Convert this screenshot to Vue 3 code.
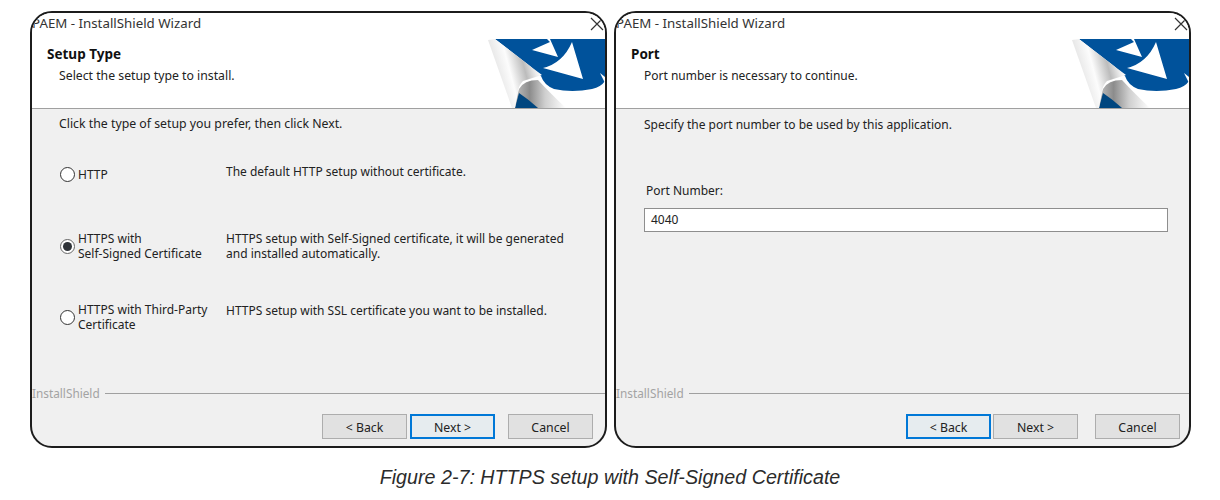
<template>
  <div class="page">
    <div class="windows">
      <div class="window" v-for="win in windows" :key="win.id" :class="win.id">
        <div class="title">PAEM - InstallShield Wizard</div>
        <svg class="close" viewBox="0 0 14 14"><path d="M1 1L13 13M13 1L1 13" /></svg>
        <div class="head">
          <div class="head-text">
            <div class="head-title">{{ win.heading }}</div>
            <div class="head-sub">{{ win.sub }}</div>
          </div>
          <svg class="logo" viewBox="0 0 117 69">
            <defs>
              <linearGradient :id="'curl' + win.id" x1="0.1" y1="0.35" x2="0.85" y2="0.1">
                <stop offset="0" stop-color="#e6e6e6" />
                <stop offset="0.32" stop-color="#fcfcfc" />
                <stop offset="0.66" stop-color="#bcbcbc" />
                <stop offset="0.88" stop-color="#ececec" />
                <stop offset="1" stop-color="#ffffff" />
              </linearGradient>
              <linearGradient :id="'fold' + win.id" x1="0" y1="0" x2="1" y2="0">
                <stop offset="0" stop-color="#c4c4c4" />
                <stop offset="0.3" stop-color="#8c8c8c" />
                <stop offset="0.6" stop-color="#cfcfcf" />
                <stop offset="1" stop-color="#ffffff" />
              </linearGradient>
            </defs>
            <path fill="#00529b" d="M7 0H117V42Q113 48 104 50Q84 54 66 50Q56 46 53 37L42 27Z" />
            <path fill="#fff" d="M44 11L62 3L59 0H62L70 18Z" />
            <path fill="#fff" d="M84 3L95 40L55 29Q75 24 84 3Z" />
            <path fill="#fff" d="M112 34L117 38V44Z" />
            <path :fill="'url(#fold' + win.id + ')'" d="M31 50Q36 41 50 41Q62 54 78 69H26Z" />
            <path fill="#00467f" d="M27 69L31 54Q40 60 50 69Z" />
            <path :fill="'url(#curl' + win.id + ')'" d="M0 1L7 0L42 27L54 36L35 42Q31 46 30 52L27 69H24Z" />
          </svg>
        </div>
        <div class="body">
          <template v-if="win.id === 'type'">
            <div class="intro">Click the type of setup you prefer, then click Next.</div>
            <div class="option" v-for="opt in options" :key="opt.cls" :class="opt.cls">
              <div class="choice">
                <span class="radio" :class="{ on: opt.on }"></span>
                <span class="choice-label">{{ opt.label }}</span>
              </div>
              <div class="choice-desc">{{ opt.desc }}</div>
            </div>
          </template>
          <template v-else>
            <div class="intro port-intro">Specify the port number to be used by this application.</div>
            <div class="port-label">Port Number:</div>
            <div class="port-input">4040</div>
          </template>
        </div>
        <div class="brand">
          <span>InstallShield</span>
          <div class="rule"></div>
        </div>
        <div class="buttons">
          <div class="btn" :class="{ focus: win.focus === 'back' }">&lt; Back</div>
          <div class="btn" :class="{ focus: win.focus === 'next' }">Next &gt;</div>
          <div class="btn cancel">Cancel</div>
        </div>
      </div>
    </div>
    <div class="caption">Figure 2-7: HTTPS setup with Self-Signed Certificate</div>
  </div>
</template>

<script setup>
const windows = [
  { id: 'type', heading: 'Setup Type', sub: 'Select the setup type to install.', focus: 'next' },
  { id: 'port', heading: 'Port', sub: 'Port number is necessary to continue.', focus: 'back' }
]

const options = [
  { cls: 'opt-http', label: 'HTTP', desc: 'The default HTTP setup without certificate.', on: false },
  {
    cls: 'opt-self',
    label: 'HTTPS with\nSelf-Signed Certificate',
    desc: 'HTTPS setup with Self-Signed certificate, it will be generated\nand installed automatically.',
    on: true
  },
  {
    cls: 'opt-third',
    label: 'HTTPS with Third-Party\nCertificate',
    desc: 'HTTPS setup with SSL certificate you want to be installed.',
    on: false
  }
]
</script>

<style>
html, body {
  background: #fff;
}
</style>

<style scoped>
.page {
  width: 1220px;
  height: 500px;
  padding: 11px 0 0 30px;
  box-sizing: border-box;
  font-family: "Noto Sans", "Open Sans", sans-serif;
  color: #222;
  overflow: hidden;
}
.windows {
  display: flex;
  gap: 7px;
}
.window {
  position: relative;
  width: 577px;
  height: 437px;
  box-sizing: border-box;
  display: flex;
  flex-direction: column;
  border: 2px solid #1c1c1c;
  border-radius: 22px;
  background: #f0f0f0;
  overflow: hidden;
}
.title {
  position: absolute;
  left: 0;
  top: 1px;
  z-index: 1;
  font-size: 13.3px;
  line-height: 18px;
  color: #333;
}
.close {
  position: absolute;
  right: 1px;
  top: 4px;
  z-index: 1;
  width: 14px;
  height: 14px;
}
.close path {
  fill: none;
  stroke: #333;
  stroke-width: 1.2;
}
.head {
  height: 96px;
  flex: none;
  box-sizing: border-box;
  display: flex;
  justify-content: space-between;
  align-items: flex-end;
  background: #fff;
  border-bottom: 1px solid #a0a0a0;
}
.head-text {
  align-self: flex-start;
  padding: 33px 0 0 15px;
}
.head-title {
  font-size: 13.5px;
  font-weight: 700;
  line-height: 16px;
  color: #111;
}
.head-sub {
  margin: 6px 0 0 12px;
  font-size: 12px;
  line-height: 15px;
}
.type .head-sub {
  font-size: 12.25px;
}
.port .head-sub {
  margin-left: 13px;
}
.logo {
  width: 117px;
  height: 69px;
  display: block;
}
.body {
  flex: 1;
  padding: 7px 0 0 27px;
  font-size: 12px;
  line-height: 15px;
}
.intro {
  margin-bottom: 33px;
  font-size: 12.3px;
}
.port-intro {
  margin: 1px 0 0 1px;
  font-size: 12px;
}
.option {
  display: grid;
  grid-template-columns: 167px 1fr;
  align-items: start;
}
.opt-http {
  height: 67px;
}
.opt-self {
  height: 71px;
}
.choice {
  position: relative;
  display: flex;
  align-items: center;
  gap: 3px;
}
.opt-http .choice {
  margin-top: 3px;
}
.radio {
  flex: none;
  width: 15px;
  height: 15px;
  box-sizing: border-box;
  display: flex;
  align-items: center;
  justify-content: center;
  margin-left: 1px;
  border: 1px solid #333;
  border-radius: 50%;
  background: #fff;
}
.radio.on {
  border-color: #666;
}
.radio.on::after {
  content: "";
  width: 9px;
  height: 9px;
  border-radius: 50%;
  background: #2f3338;
}
.choice-label,
.choice-desc {
  white-space: pre-line;
}
.opt-third .choice-desc {
  margin-top: 1px;
}
.port-label {
  margin: 51px 0 0 3px;
}
.port-input {
  width: 524px;
  height: 24px;
  box-sizing: border-box;
  margin: 10px 0 0 1px;
  padding: 0 6px;
  line-height: 21px;
  background: #fff;
  border: 1px solid #8e8e8e;
}
.brand {
  display: flex;
  align-items: center;
  gap: 5px;
  height: 14px;
  margin-bottom: 14px;
  font-size: 11.8px;
  color: #a3a3a3;
}
.rule {
  flex: 1;
  height: 1px;
  background: #a0a0a0;
}
.buttons {
  display: flex;
  justify-content: flex-end;
  padding: 0 12px 7px 0;
  gap: 3px;
}
.port .buttons {
  padding-right: 9px;
  gap: 2px;
}
.btn {
  width: 85px;
  height: 25px;
  box-sizing: border-box;
  display: flex;
  align-items: center;
  justify-content: center;
  padding-top: 1px;
  font-size: 12.3px;
  background: #e1e1e1;
  border: 1px solid #adadad;
}
.btn.focus {
  border: 2px solid #0078d7;
  background: #e6ecef;
}
.cancel {
  margin-left: 10px;
}
.port .cancel {
  margin-left: 15px;
}
.caption {
  margin: 18px 0 0 -30px;
  text-align: center;
  font-family: "Liberation Sans", sans-serif;
  font-size: 19.7px;
  line-height: 22px;
  font-style: italic;
  color: #2b2b2b;
}
</style>
